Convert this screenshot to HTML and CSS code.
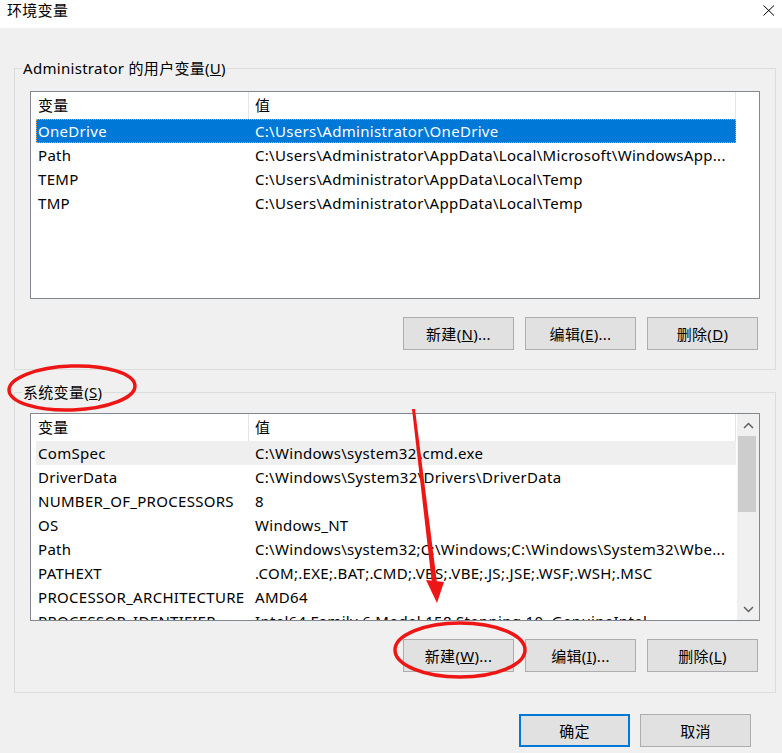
FILE: index.html
```html
<!DOCTYPE html>
<html>
  <head>
    <meta charset="UTF-8" />
    <title>环境变量</title>
    <link rel="stylesheet" href="styles.css">
  </head>
  <body>
    <div class="window">
      <!-- 标题栏 -->
      <div class="titlebar">
        <span class="title">环境变量</span>
        <svg class="close-icon" width="12" height="11" viewBox="0 0 12 11">
          <path d="M0.5 0.5 L11 10.5 M11 0.5 L0.5 10.5" stroke="#000" stroke-width="1" fill="none" />
        </svg>
      </div>

      <div class="dialog-body">
        <!-- 用户变量 -->
        <fieldset class="group group-user">
          <legend>Administrator 的用户变量(<u>U</u>)</legend>
          <div class="group-inner">
            <div class="listview">
              <div class="lv-main">
                <div class="lv-header">
                  <div class="col-name">变量</div>
                  <div class="col-value">值</div>
                </div>
                <div class="lv-row selected">
                  <div class="col-name">OneDrive</div>
                  <div class="col-value">C:\Users\Administrator\OneDrive</div>
                </div>
                <div class="lv-row">
                  <div class="col-name">Path</div>
                  <div class="col-value">C:\Users\Administrator\AppData\Local\Microsoft\WindowsApp...</div>
                </div>
                <div class="lv-row">
                  <div class="col-name">TEMP</div>
                  <div class="col-value">C:\Users\Administrator\AppData\Local\Temp</div>
                </div>
                <div class="lv-row">
                  <div class="col-name">TMP</div>
                  <div class="col-value">C:\Users\Administrator\AppData\Local\Temp</div>
                </div>
              </div>
            </div>
            <div class="btn-row">
              <button class="btn">新建(<u>N</u>)...</button>
              <button class="btn">编辑(<u>E</u>)...</button>
              <button class="btn">删除(<u>D</u>)</button>
            </div>
          </div>
        </fieldset>

        <!-- 系统变量 -->
        <fieldset class="group group-system">
          <legend>系统变量(<u>S</u>)</legend>
          <div class="group-inner">
            <div class="listview">
              <div class="lv-main">
                <div class="lv-header">
                  <div class="col-name">变量</div>
                  <div class="col-value">值</div>
                </div>
                <div class="lv-row hover">
                  <div class="col-name">ComSpec</div>
                  <div class="col-value">C:\Windows\system32\cmd.exe</div>
                </div>
                <div class="lv-row">
                  <div class="col-name">DriverData</div>
                  <div class="col-value">C:\Windows\System32\Drivers\DriverData</div>
                </div>
                <div class="lv-row">
                  <div class="col-name">NUMBER_OF_PROCESSORS</div>
                  <div class="col-value">8</div>
                </div>
                <div class="lv-row">
                  <div class="col-name">OS</div>
                  <div class="col-value">Windows_NT</div>
                </div>
                <div class="lv-row">
                  <div class="col-name">Path</div>
                  <div class="col-value">C:\Windows\system32;C:\Windows;C:\Windows\System32\Wbe...</div>
                </div>
                <div class="lv-row">
                  <div class="col-name">PATHEXT</div>
                  <div class="col-value">.COM;.EXE;.BAT;.CMD;.VBS;.VBE;.JS;.JSE;.WSF;.WSH;.MSC</div>
                </div>
                <div class="lv-row">
                  <div class="col-name">PROCESSOR_ARCHITECTURE</div>
                  <div class="col-value">AMD64</div>
                </div>
                <div class="lv-row">
                  <div class="col-name">PROCESSOR_IDENTIFIER</div>
                  <div class="col-value">Intel64 Family 6 Model 158 Stepping 10, GenuineIntel</div>
                </div>
              </div>
              <div class="scrollbar">
                <div class="sb-btn">
                  <svg width="11" height="7" viewBox="0 0 11 7"><path d="M1 6 L5.5 1.5 L10 6" stroke="#606060" stroke-width="1.5" fill="none" /></svg>
                </div>
                <div class="sb-track">
                  <div class="sb-thumb"></div>
                </div>
                <div class="sb-btn">
                  <svg width="11" height="7" viewBox="0 0 11 7"><path d="M1 1 L5.5 5.5 L10 1" stroke="#606060" stroke-width="1.5" fill="none" /></svg>
                </div>
              </div>
            </div>
            <div class="btn-row">
              <button class="btn">新建(<u>W</u>)...</button>
              <button class="btn">编辑(<u>I</u>)...</button>
              <button class="btn">删除(<u>L</u>)</button>
            </div>
          </div>
        </fieldset>

        <div class="dialog-buttons">
          <button class="btn btn-default">确定</button>
          <button class="btn">取消</button>
        </div>
      </div>

      <!-- 红色标注 -->
      <svg class="annotations" width="782" height="753" viewBox="0 0 782 753">
        <ellipse cx="72" cy="388" rx="63" ry="22" transform="rotate(-2 72 388)" fill="none" stroke="#ee1515" stroke-width="3.5" />
        <ellipse cx="460" cy="650" rx="65" ry="27" fill="none" stroke="#ee1515" stroke-width="3.5" />
        <polygon points="412,409 415,409 437,583 432,584" fill="#ee1515" />
        <polygon points="426,580 444,582 437,603" fill="#ee1515" />
      </svg>
    </div>
  </body>
</html>
```

FILE: styles.css
```css
body {
  margin: 0;
  padding: 0;
  overflow: hidden;
}

.window {
  position: relative;
  width: 782px;
  height: 753px;
  background: #f0f0f0;
  font-family: "Noto Sans", "Noto Sans CJK SC", sans-serif;
  font-size: 15px;
  letter-spacing: 0.3px;
  color: #000;
}

/* 标题栏 */
.titlebar {
  height: 28px;
  background: #fff;
  display: flex;
  justify-content: space-between;
  align-items: flex-start;
}

.title {
  padding-left: 7px;
  line-height: 20px;
}

.close-icon {
  margin-top: 5px;
  margin-right: 7px;
}

/* 分组框 */
.group {
  margin: 0 6px 0 14px;
  padding: 0;
  border: 1px solid #dcdcdc;
  min-width: 0;
}

.group legend {
  margin-left: 7px;
  padding: 0 1px;
  line-height: 20px;
}

.group-user {
  margin-top: 30px;
}

.group-system {
  margin-top: 12px;
}

.group-inner {
  padding: 13px 15px 19px 15px;
}

.group-system .group-inner {
  padding-top: 11px;
  padding-bottom: 20px;
}

/* 列表 */
.listview {
  height: 206px;
  border: 1px solid #828790;
  background: #fff;
  display: flex;
  overflow: hidden;
}

.lv-main {
  flex: 1;
  padding-left: 5px;
  overflow: hidden;
}

.lv-header,
.lv-row {
  width: 700px;
  display: flex;
  white-space: nowrap;
}

.lv-header {
  height: 27px;
  line-height: 27px;
}

.lv-row {
  height: 24px;
  line-height: 24px;
}

.col-name {
  width: 213px;
  flex: none;
  padding-left: 2px;
  box-sizing: border-box;
  overflow: hidden;
}

.col-value {
  flex: 1;
  padding-left: 6px;
  overflow: hidden;
}

.lv-header .col-name,
.lv-header .col-value {
  border-right: 1px solid #e5e5e5;
}

.lv-row.selected {
  background: #0078d7;
  color: #fff;
  outline: 1px dotted #f2a44a;
  outline-offset: -1px;
}

.lv-row.hover {
  background: #efefef;
}

/* 滚动条 */
.scrollbar {
  width: 22px;
  flex: none;
  background: #f0f0f0;
  display: flex;
  flex-direction: column;
}

.sb-btn {
  height: 22px;
  display: flex;
  align-items: center;
  justify-content: center;
}

.sb-track {
  flex: 1;
}

.sb-thumb {
  height: 76px;
  margin: 0 3px 0 1px;
  background: #cdcdcd;
}

/* 按钮 */
.btn-row {
  display: flex;
  justify-content: flex-end;
  gap: 11px;
  margin-top: 18px;
  padding-right: 2px;
}

.btn {
  width: 111px;
  height: 33px;
  box-sizing: border-box;
  border: 1px solid #adadad;
  background: #e1e1e1;
  font-family: inherit;
  font-size: 15px;
  letter-spacing: inherit;
  color: #000;
  padding: 0;
}

.dialog-buttons {
  display: flex;
  justify-content: flex-end;
  gap: 10px;
  margin-top: 21px;
  padding-right: 31px;
}

.btn-default {
  border: 2px solid #0078d7;
}

/* 标注层 */
.annotations {
  position: absolute;
  top: 0;
  left: 0;
  pointer-events: none;
}
```
